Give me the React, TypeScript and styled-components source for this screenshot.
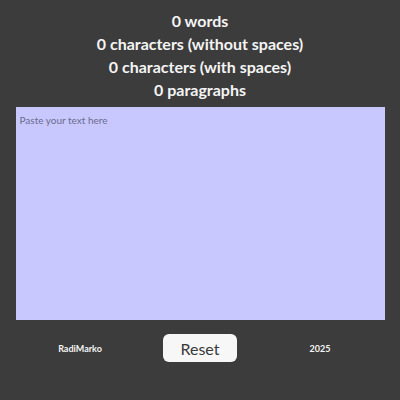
import React, { useState } from 'react';
import styled, { createGlobalStyle } from 'styled-components';

const GlobalStyle = createGlobalStyle`
    html, body {
        margin: 0;
        padding: 0;
        background: #3c3c3c;
    }
    body {
        font-family: Lato, "Noto Sans", sans-serif;
    }
`;

const Page = styled.div`
    width: 400px;
    height: 400px;
    background: #3c3c3c;
    display: flex;
    flex-direction: column;
    align-items: center;
    padding-top: 9px;
    box-sizing: border-box;
`;

const Stats = styled.div`
    display: flex;
    flex-direction: column;
    align-items: center;
`;

const StatLine = styled.div`
    color: #f4f4f4;
    font-size: 16px;
    font-weight: 700;
    line-height: 23px;
`;

const TextArea = styled.textarea`
    margin-top: 6px;
    width: 369px;
    height: 213px;
    box-sizing: border-box;
    background: #c8c8ff;
    border: none;
    outline: none;
    resize: none;
    padding: 7px 4px;
    font-family: Lato, "Noto Sans", sans-serif;
    font-size: 10px;
    color: #333;
    &::placeholder {
        color: #6b6b8a;
    }
`;

const Footer = styled.div`
    margin-top: 14px;
    width: 360px;
    display: grid;
    grid-template-columns: repeat(3, 1fr);
    align-items: center;
    justify-items: center;
`;

const FooterText = styled.span`
    color: #f4f4f4;
    font-size: 9px;
    font-weight: 700;
`;

const ResetButton = styled.button`
    width: 74px;
    height: 28px;
    background: #f7f7f7;
    border: none;
    border-radius: 6px;
    color: #3a3a3a;
    font-family: Lato, "Noto Sans", sans-serif;
    font-size: 16px;
    cursor: pointer;
`;

export default function App() {
    const [text, setText] = useState('');

    const words = text.trim() ? text.trim().split(/\s+/).length : 0;
    const noSpaces = text.replace(/\s/g, '').length;
    const paragraphs = text.split(/\n+/).filter((p) => p.trim()).length;

    return (
        <Page>
            <GlobalStyle />
            <Stats>
                <StatLine>{words} words</StatLine>
                <StatLine>{noSpaces} characters (without spaces)</StatLine>
                <StatLine>{text.length} characters (with spaces)</StatLine>
                <StatLine>{paragraphs} paragraphs</StatLine>
            </Stats>
            <TextArea
                placeholder="Paste your text here"
                value={text}
                onChange={(e) => setText(e.target.value)}
            />
            <Footer>
                <FooterText>RadiMarko</FooterText>
                <ResetButton onClick={() => setText('')}>Reset</ResetButton>
                <FooterText>2025</FooterText>
            </Footer>
        </Page>
    );
}
